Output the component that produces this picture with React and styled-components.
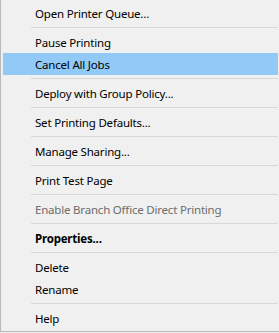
import React from 'react';
import styled, { createGlobalStyle } from 'styled-components';

const GlobalStyle = createGlobalStyle`
  html, body {
    margin: 0;
    padding: 0;
    background: #f0f0f0;
  }
`;

const Menu = styled.ul`
  list-style: none;
  margin: 0;
  width: 275px;
  padding: 2px 1px 2px 2px;
  background: #f0f0f0;
  border: 1px solid #b9b9b9;
  border-top: none;
  font-family: "Noto Sans", "Liberation Sans", sans-serif;
  font-size: 11.5px;
  letter-spacing: -0.2px;
  color: #000;
`;

const Item = styled.li`
  height: 22px;
  display: flex;
  align-items: center;
  padding-left: 32px;
  background: ${(p) => (p.$active ? '#91c9f7' : 'transparent')};
  color: ${(p) => (p.$disabled ? '#6d6d6d' : '#000')};
  font-weight: ${(p) => (p.$bold ? 700 : 400)};
  white-space: nowrap;
  cursor: default;
`;

const Separator = styled.li`
  height: 7px;
  display: flex;
  align-items: center;
  padding-left: 28px;

  &::after {
    content: '';
    flex: 1;
    height: 1px;
    background: #d7d7d7;
  }
`;

const entries = [
  { label: 'Open Printer Queue...' },
  'sep',
  { label: 'Pause Printing' },
  { label: 'Cancel All Jobs', active: true },
  'sep',
  { label: 'Deploy with Group Policy...' },
  'sep',
  { label: 'Set Printing Defaults...' },
  'sep',
  { label: 'Manage Sharing...' },
  'sep',
  { label: 'Print Test Page' },
  'sep',
  { label: 'Enable Branch Office Direct Printing', disabled: true },
  'sep',
  { label: 'Properties...', bold: true },
  'sep',
  { label: 'Delete' },
  { label: 'Rename' },
  'sep',
  { label: 'Help' },
];

const App = () => {
  return (
    <>
      <GlobalStyle />
      <Menu>
        {entries.map((e, i) =>
          e === 'sep' ? (
            <Separator key={i} />
          ) : (
            <Item key={i} $active={e.active} $disabled={e.disabled} $bold={e.bold}>
              {e.label}
            </Item>
          )
        )}
      </Menu>
    </>
  );
};

export default App;
